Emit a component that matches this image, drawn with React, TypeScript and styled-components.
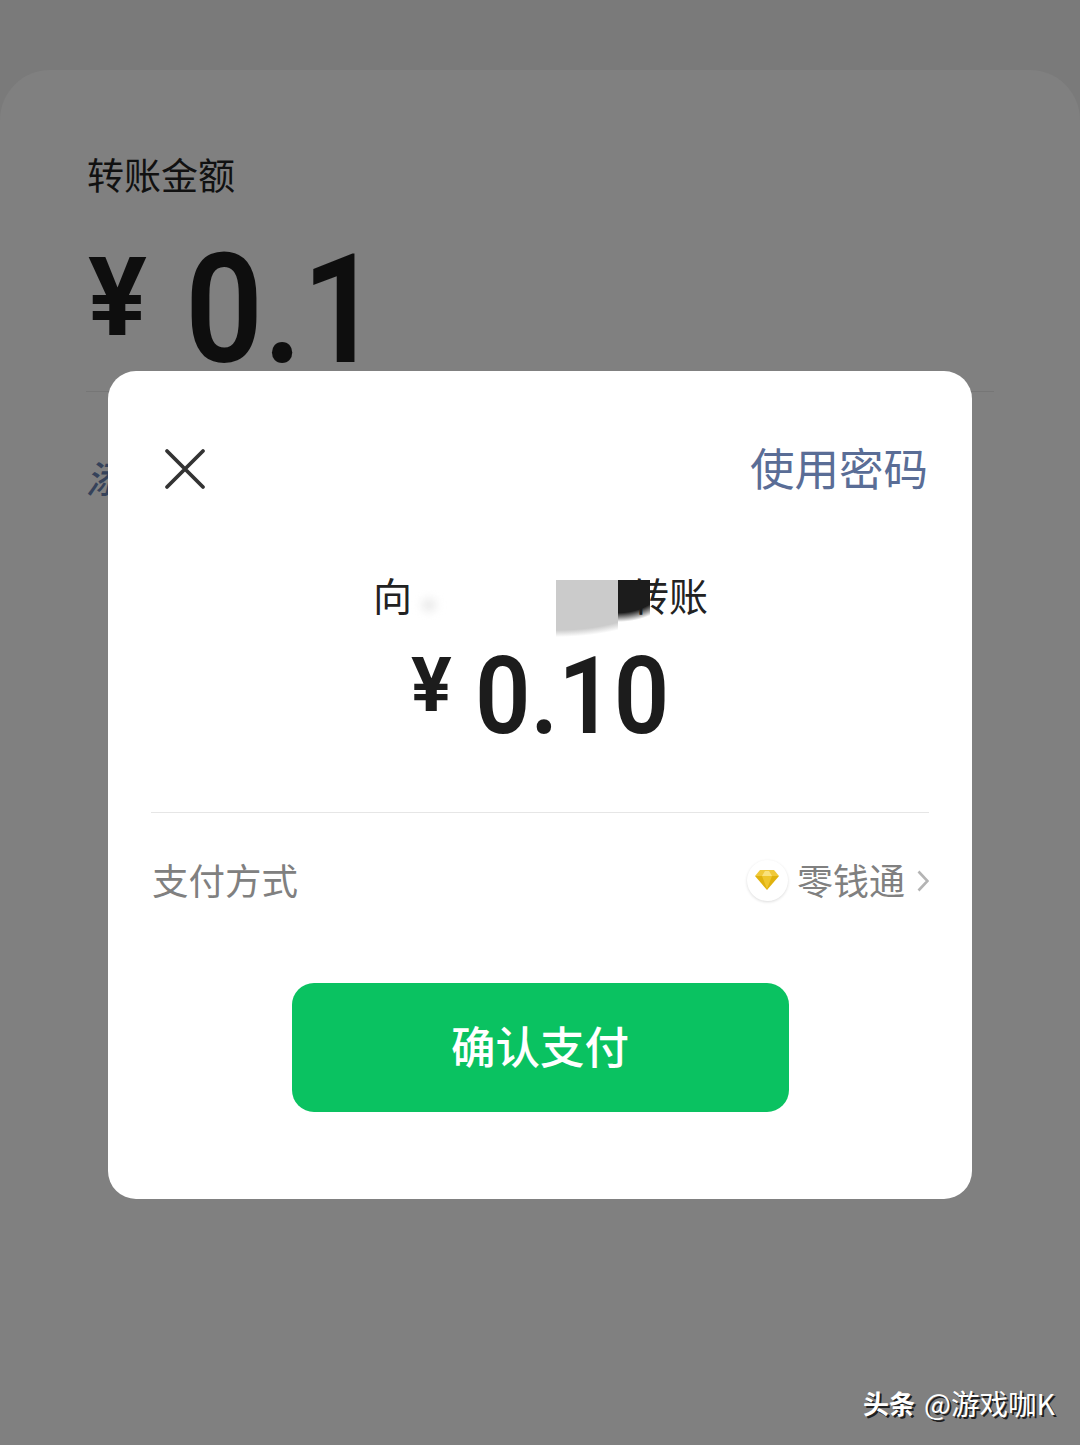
import styled, { createGlobalStyle } from "styled-components";

const cjk = `"Noto Sans CJK SC", "Noto Sans", sans-serif`;
const digits = `Roboto, "Liberation Sans", sans-serif`;

const GlobalStyle = createGlobalStyle`
  html, body {
    margin: 0;
    padding: 0;
    background: #7a7a7a;
  }
  * {
    box-sizing: border-box;
  }
`;

const CloseIcon = () => (
  <svg width="42" height="42" viewBox="0 0 42 42" fill="none">
    <path d="M3 3 L39 39 M39 3 L3 39" stroke="#333" strokeWidth="3.8" strokeLinecap="round" />
  </svg>
);

const GemIcon = () => (
  <svg width="24" height="20" viewBox="0 0 24 20">
    <path d="M5 0 H19 L24 6 H0 Z" fill="#f0c93a" />
    <path d="M0 6 H24 L12 20 Z" fill="#e0b20e" />
    <path d="M7 6 H17 L12 19 Z" fill="#efc62c" />
    <path d="M7 6 L10 1 H14 L17 6 Z" fill="#f9e27c" />
  </svg>
);

const ChevronIcon = () => (
  <svg width="12" height="22" viewBox="0 0 12 22" fill="none">
    <path d="M1.5 1.5 L10.5 11 L1.5 20.5" stroke="#b4b4b4" strokeWidth="2.6" />
  </svg>
);

const App = () => (
  <Page>
    <GlobalStyle />
    <Sheet>
      <SheetLabel>转账金额</SheetLabel>
      <SheetAmount>
        <SheetYen>¥</SheetYen>
        <SheetDigits>0.1</SheetDigits>
      </SheetAmount>
      <SheetDivider />
      <SheetNote>添加转账说明</SheetNote>
    </Sheet>

    <Dialog>
      <DialogHeader>
        <CloseIcon />
        <PasswordLink>使用密码</PasswordLink>
      </DialogHeader>

      <Payee>
        <PayeeStart>向</PayeeStart>
        <Smudge />
        <NameGap />
        <GreyBlock />
        <BlackBlock />
        <PayeeEnd>转账</PayeeEnd>
      </Payee>

      <Amount>
        <AmountYen>¥</AmountYen>
        <AmountDigits>0.10</AmountDigits>
      </Amount>

      <DialogDivider />

      <MethodRow>
        <span>支付方式</span>
        <MethodValue>
          <GemBadge>
            <GemIcon />
          </GemBadge>
          <MethodName>零钱通</MethodName>
          <ChevronSlot>
            <ChevronIcon />
          </ChevronSlot>
        </MethodValue>
      </MethodRow>

      <ConfirmButton>确认支付</ConfirmButton>
    </Dialog>

    <Watermark>
      <WatermarkBrand>头条</WatermarkBrand>
      <WatermarkName>@游戏咖K</WatermarkName>
    </Watermark>
  </Page>
);

export default App;

const Page = styled.div`
  position: relative;
  width: 1080px;
  height: 1445px;
  padding-top: 70px;
  overflow: hidden;
  background: #7a7a7a;
`;

const Sheet = styled.section`
  height: 1375px;
  padding: 62px 86px 0;
  border-radius: 50px 50px 0 0;
  background: #808080;
  font-family: ${cjk};
  color: #111;
`;

const SheetLabel = styled.div`
  height: 86px;
  padding-left: 1px;
  font-size: 37px;
  line-height: 84px;
`;

const SheetAmount = styled.div`
  display: flex;
  align-items: flex-start;
  height: 173px;
  padding-left: 2px;
  color: #0e0e0e;
`;

const SheetYen = styled.span`
  flex: none;
  width: 97px;
  height: 159px;
  font-family: ${digits};
  font-size: 110px;
  font-weight: 700;
  line-height: 159px;
`;

const SheetDigits = styled.span`
  height: 173px;
  font-family: ${digits};
  font-size: 152px;
  font-weight: 600;
  line-height: 185px;
  transform: scaleX(0.9);
  transform-origin: left;
`;

const SheetDivider = styled.div`
  height: 1px;
  background: #767676;
`;

const SheetNote = styled.div`
  margin-top: 58px;
  font-size: 37px;
  font-weight: 500;
  line-height: 54px;
  font-style: italic;
  color: #35425a;
`;

const Dialog = styled.section`
  position: absolute;
  left: 108px;
  top: 371px;
  width: 864px;
  height: 828px;
  padding: 76px 43px 0;
  border-radius: 28px;
  background: #fff;
  font-family: ${cjk};
`;

const DialogHeader = styled.header`
  display: flex;
  align-items: center;
  justify-content: space-between;
  height: 44px;
  padding: 0 1px 0 13px;
`;

const PasswordLink = styled.span`
  margin-bottom: 4px;
  font-size: 44.5px;
  line-height: 40px;
  color: #5a6d96;
`;

const Payee = styled.div`
  position: relative;
  display: flex;
  align-items: flex-start;
  height: 60px;
  margin-top: 74px;
  padding-left: 222px;
  font-size: 39px;
  line-height: 58px;
  color: #222;
`;

const PayeeStart = styled.span`
  flex: none;
  width: 39px;
`;

const NameGap = styled.span`
  flex: none;
  width: 144px;
`;

const GreyBlock = styled.span`
  flex: none;
  width: 62px;
  height: 57px;
  margin-top: 15px;
  background: radial-gradient(ellipse 130px 57px at 0 0, #cbcbcb 88%, transparent 100%);
`;

const BlackBlock = styled.span`
  position: relative;
  z-index: 1;
  flex: none;
  width: 32px;
  height: 42px;
  margin-top: 15px;
  background: radial-gradient(ellipse 60px 42px at 0 0, #1c1c1c 78%, transparent 100%);
`;

const PayeeEnd = styled.span`
  margin-left: -20px;
`;

const Smudge = styled.span`
  position: absolute;
  left: 270px;
  top: 33px;
  width: 16px;
  height: 14px;
  border-radius: 50%;
  background: #ececec;
  filter: blur(4px);
`;

const Amount = styled.div`
  display: flex;
  align-items: flex-start;
  height: 143px;
  padding-left: 260px;
  color: #1c1c1c;
`;

const AmountYen = styled.span`
  flex: none;
  width: 64px;
  height: 121px;
  font-family: ${digits};
  font-size: 76px;
  font-weight: 700;
  line-height: 121px;
`;

const AmountDigits = styled.span`
  height: 143px;
  font-family: ${digits};
  font-size: 108px;
  font-weight: 600;
  line-height: 143px;
  transform: scaleX(0.9);
  transform-origin: left;
`;

const DialogDivider = styled.div`
  height: 1px;
  margin-top: 44px;
  background: #e6e6e6;
`;

const MethodRow = styled.div`
  display: flex;
  align-items: center;
  justify-content: space-between;
  height: 132px;
  padding-left: 1px;
  font-size: 36.5px;
  color: #808080;
`;

const MethodValue = styled.div`
  display: flex;
  align-items: center;
`;

const GemBadge = styled.span`
  display: flex;
  align-items: center;
  justify-content: center;
  width: 41px;
  height: 41px;
  margin-top: 2px;
  border-radius: 50%;
  background: #fff;
  box-shadow: 0 1px 3px rgba(0, 0, 0, 0.14);
`;

const MethodName = styled.span`
  margin: 0 12px 0 9px;
  font-size: 36px;
`;

const ChevronSlot = styled.span`
  display: flex;
  margin-top: 4px;
`;

const ConfirmButton = styled.button`
  display: block;
  width: 497px;
  height: 129px;
  margin: 38px auto 0;
  padding: 0 0 6px;
  border: 0;
  border-radius: 22px;
  background: #0ac261;
  font-family: ${cjk};
  font-size: 44.5px;
  font-weight: 500;
  color: #fff;
`;

const Watermark = styled.div`
  position: absolute;
  left: 863px;
  top: 1383px;
  display: flex;
  align-items: center;
  gap: 9px;
  font-family: ${cjk};
  line-height: 40px;
  color: #fff;
  text-shadow: 2px 2px 0 rgba(0, 0, 0, 0.75);
`;

const WatermarkBrand = styled.span`
  font-size: 26px;
  font-weight: 700;
`;

const WatermarkName = styled.span`
  font-size: 28.5px;
`;
